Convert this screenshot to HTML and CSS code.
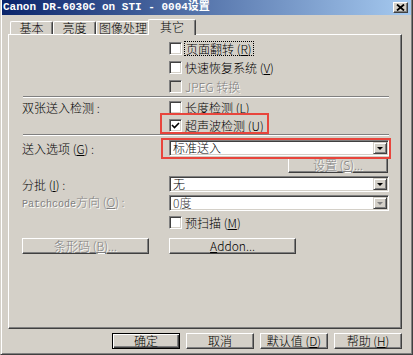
FILE: index.html
```html
<!DOCTYPE html>
<html lang="zh-CN">
  <head>
    <meta charset="UTF-8" />
    <title>Canon DR-6030C on STI - 0004设置</title>
    <link rel="stylesheet" href="styles.css">
  </head>
  <body>
    <div class="window">
      <div class="titlebar">
        <span class="title">Canon DR-6030C on STI - 0004设置</span>
        <span class="close">
          <svg width="9" height="7" viewBox="0 0 9 7">
            <path d="M1 0.5 L8 6.5 M8 0.5 L1 6.5" stroke="#000" stroke-width="1.8" fill="none" />
          </svg>
        </span>
      </div>

      <div class="tabs">
        <div class="tab t1">基本</div>
        <div class="tab t2">亮度</div>
        <div class="tab t3">图像处理</div>
        <div class="tab active">其它</div>
      </div>

      <div class="panel">
        <div class="checks first">
          <div class="check"><span class="box"></span><span class="focus">页面翻转 (<u>R</u>)</span></div>
          <div class="check"><span class="box"></span><span>快速恢复系统 (<u>V</u>)</span></div>
          <div class="check disabled"><span class="box"></span><span>JPEG 转换</span></div>
        </div>

        <div class="sep"></div>

        <div class="row top">
          <div class="label">双张送入检测 :</div>
          <div class="checks">
            <div class="check"><span class="box"></span><span>长度检测 (<u>L</u>)</span></div>
            <div class="check mark-check">
              <span class="box checked">
                <svg width="9" height="9" viewBox="0 0 9 9">
                  <path d="M1 4 L3.5 6.5 L8 2" stroke="#000" stroke-width="1.6" fill="none" />
                </svg>
              </span>
              <span>超声波检测 (<u>U</u>)</span>
            </div>
          </div>
        </div>

        <div class="sep second"></div>

        <div class="row feed">
          <div class="label">送入选项 (<u>G</u>) :</div>
          <div class="combo mark-combo">
            <span class="value">标准送入</span>
            <span class="arrow"><i></i></span>
          </div>
        </div>
        <div class="btnrow">
          <div class="btn disabled settings">设置 (<u>S</u>)...</div>
        </div>

        <div class="row batch">
          <div class="label">分批 (<u>I</u>) :</div>
          <div class="combo">
            <span class="value">无</span>
            <span class="arrow"><i></i></span>
          </div>
        </div>

        <div class="row patch">
          <div class="label disabled"><span class="mono">Patchcode</span>方向 (<u>O</u>) :</div>
          <div class="combo off">
            <span class="value">0度</span>
            <span class="arrow"><i></i></span>
          </div>
        </div>

        <div class="row prescan">
          <div class="label"></div>
          <div class="check"><span class="box"></span><span>预扫描 (<u>M</u>)</span></div>
        </div>

        <div class="row buttons">
          <div class="label">
            <div class="btn wide disabled">条形码 (<u>B</u>)...</div>
          </div>
          <div class="btn wide"><u>A</u>ddon...</div>
        </div>
      </div>

      <div class="footer">
        <div class="btn default">确定</div>
        <div class="btn">取消</div>
        <div class="btn">默认值 (<u>D</u>)</div>
        <div class="btn">帮助 (<u>H</u>)</div>
      </div>
    </div>
  </body>
</html>
```

FILE: styles.css
```css
body {
  margin: 0;
  font-family: "Noto Sans CJK SC", "Noto Sans", sans-serif;
  font-size: 12px;
  font-weight: 300;
  line-height: 13px;
  color: #000;
  background: #d4d0c8;
}
u {
  text-decoration: underline;
}
.mono {
  font-family: "Liberation Mono", monospace;
  font-size: 10px;
}
.window {
  width: 413px;
  height: 355px;
  box-sizing: border-box;
  background: #d4d0c8;
  border: 1px solid;
  border-top: 0;
  border-color: #d4d0c8 #404040 #404040 #d4d0c8;
  box-shadow: inset 1px 0 #fff, inset -1px -1px #808080;
  padding: 0 1px 1px 1px;
}
.titlebar {
  height: 15px;
  background: linear-gradient(to right, #0a246a, #a6caf0);
  display: flex;
  align-items: center;
  justify-content: space-between;
  padding: 0 3px 0 1px;
}
.title {
  color: #fff;
  font-family: "Liberation Mono", "Noto Sans CJK SC", monospace;
  font-weight: bold;
  font-size: 11px;
  line-height: 15px;
}
.close {
  width: 15px;
  height: 11px;
  box-sizing: border-box;
  background: #d4d0c8;
  border: 1px solid;
  border-color: #fff #404040 #404040 #fff;
  box-shadow: inset -1px -1px #808080;
  display: flex;
  align-items: center;
  justify-content: center;
}

/* tabs */
.tabs {
  display: flex;
  align-items: flex-start;
  height: 16px;
  margin: 4px 0 -1px 8px;
  position: relative;
  z-index: 1;
}
.tab {
  height: 13px;
  margin-top: 2px;
  box-sizing: border-box;
  border-top: 1px solid #fff;
  border-left: 1px solid #fff;
  border-right: 1px solid #404040;
  border-radius: 2px 2px 0 0;
  box-shadow: inset -1px 0 #808080;
  text-align: center;
  line-height: 12px;
  background: #d4d0c8;
}
.t1,
.t2 {
  width: 43px;
}
.t3 {
  width: 54px;
}
.tab.active {
  width: 48px;
  height: 16px;
  margin: 0 0 0 -2px;
  line-height: 13px;
}

/* panel */
.panel {
  margin-left: 6px;
  width: 394px;
  height: 295px;
  box-sizing: border-box;
  border: 1px solid;
  border-color: #fff #404040 #404040 #fff;
  box-shadow: inset -1px -1px #808080;
  padding: 7px 12px 0 13px;
}
.checks {
  display: flex;
  flex-direction: column;
  gap: 6px;
}
.checks.first {
  margin-left: 147px;
}
.row.top .checks {
  gap: 5px;
}
.check {
  display: flex;
  align-items: center;
  gap: 3px;
  height: 13px;
  white-space: nowrap;
}
.box {
  width: 13px;
  height: 13px;
  flex: none;
  box-sizing: border-box;
  background: #fff;
  border: 1px solid;
  border-color: #808080 #fff #fff #808080;
  box-shadow: inset 1px 1px #404040, inset -1px -1px #d4d0c8;
  display: flex;
  align-items: center;
  justify-content: center;
}
.focus {
  outline: 1px dotted #000;
  outline-offset: 0;
  padding: 0 1px;
}
.disabled,
.check.disabled span {
  color: #808080;
  text-shadow: 1px 1px #fff;
}
.check.disabled .box {
  background: #d4d0c8;
}
.sep {
  border-top: 1px solid #808080;
  border-bottom: 1px solid #fff;
  margin: 3px 0 3px 1px;
}
.sep.second {
  margin: 2px 0 4px 1px;
}

.row {
  display: flex;
  align-items: center;
}
.row.top {
  align-items: flex-start;
}
.label {
  width: 147px;
  flex: none;
  white-space: nowrap;
}
.row.batch {
  margin-top: 3px;
}
.row.patch {
  margin-top: 3px;
}
.row.prescan {
  margin-top: 5px;
}
.row.buttons {
  margin-top: 9px;
}

.combo {
  width: 220px;
  height: 16px;
  box-sizing: border-box;
  background: #fff;
  border: 1px solid;
  border-color: #808080 #fff #fff #808080;
  box-shadow: inset 1px 1px #404040, inset -1px -1px #d4d0c8;
  display: flex;
  align-items: center;
  padding: 1px;
}
.combo .value {
  flex: 1;
  padding-left: 2px;
  line-height: 12px;
}
.arrow {
  width: 14px;
  height: 12px;
  box-sizing: border-box;
  background: #d4d0c8;
  border: 1px solid;
  border-color: #d4d0c8 #404040 #404040 #d4d0c8;
  box-shadow: inset 1px 1px #fff, inset -1px -1px #808080;
  display: flex;
  align-items: center;
  justify-content: center;
}
.arrow i {
  width: 0;
  height: 0;
  border-left: 3px solid transparent;
  border-right: 3px solid transparent;
  border-top: 3px solid #000;
}
.combo.off .value {
  color: #404040;
}
.combo.off .arrow i {
  border-top-color: #808080;
}

.btnrow {
  display: flex;
  justify-content: flex-end;
  margin: 2px 1px 0 0;
}

.btn {
  width: 68px;
  height: 16px;
  box-sizing: border-box;
  background: #d4d0c8;
  border: 1px solid;
  border-color: #fff #404040 #404040 #fff;
  box-shadow: inset -1px -1px #808080;
  text-align: center;
  line-height: 13px;
  white-space: nowrap;
}
.btn.settings {
  width: 100px;
  height: 15px;
  line-height: 12px;
}
.btn.wide {
  width: 127px;
}
.btn.default {
  border-color: #000;
  box-shadow: inset 1px 1px #fff, inset -1px -1px #404040, inset -2px -2px #808080;
}

.footer {
  display: flex;
  justify-content: flex-end;
  gap: 6px;
  margin: 4px 9px 0 0;
}

/* red annotation frames */
.mark-check,
.mark-combo {
  position: relative;
}
.mark-check::after,
.mark-combo::after {
  content: "";
  position: absolute;
  border: 2px solid #e8453c;
  box-sizing: border-box;
  pointer-events: none;
}
.mark-check::after {
  left: -9px;
  top: -6px;
  width: 109px;
  height: 21px;
}
.mark-combo::after {
  left: -9px;
  right: -3px;
  top: -3px;
  bottom: -4px;
}
```
